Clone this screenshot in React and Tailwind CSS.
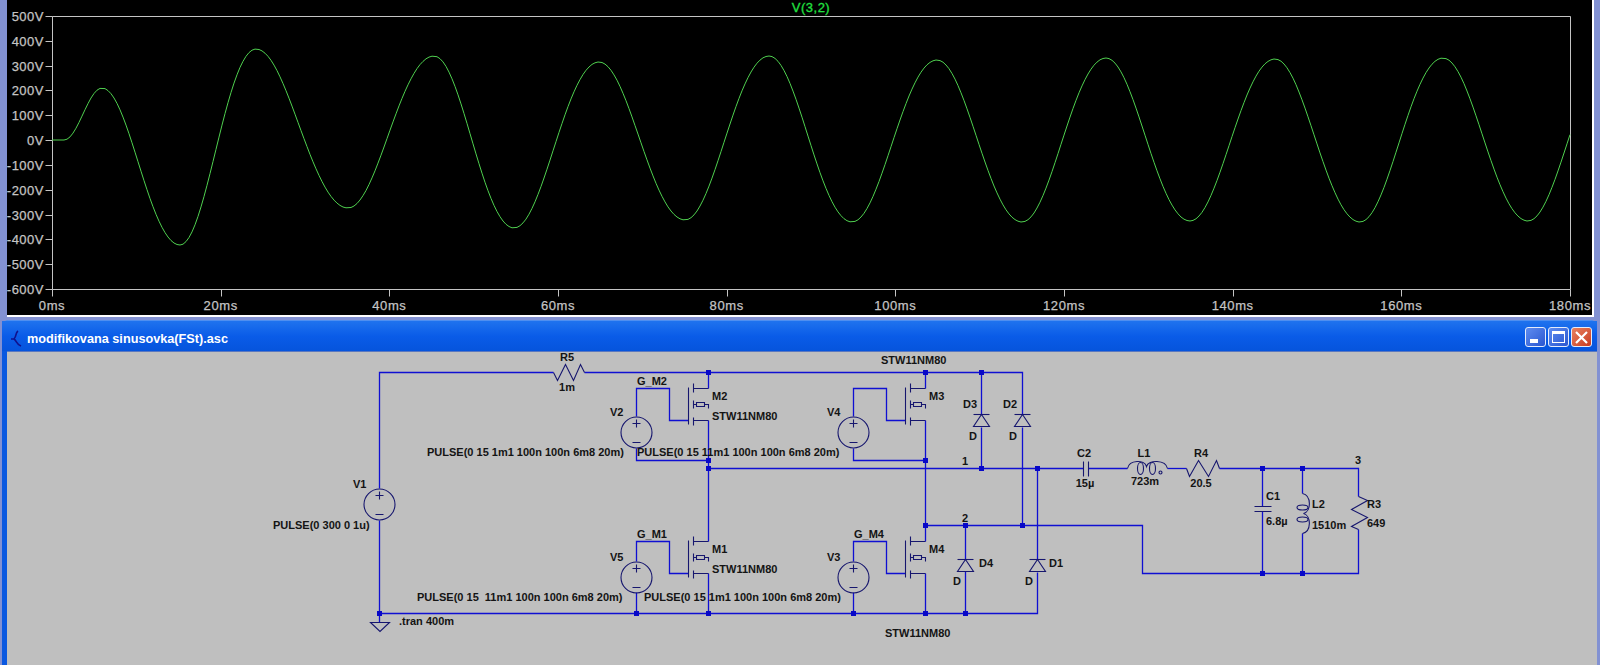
import React from 'react';

// extremes of the V(3,2) trace in page pixels
const EXTREMES = [
  [64, 140], [102, 88], [180, 245], [256, 49], [348, 208], [434, 56], [514, 228], [599, 62],
  [685, 220], [769, 56], [852, 222], [937, 60], [1022, 222], [1106, 58], [1190, 221], [1275, 59],
  [1360, 222], [1443, 58], [1528, 221], [1612, 58],
];

const tracePath = () => {
  let d = 'M52 140 L64 140';
  for (let i = 0; i < EXTREMES.length - 1; i++) {
    const [x0, y0] = EXTREMES[i];
    const [x1, y1] = EXTREMES[i + 1];
    for (let x = x0 + 3; x <= x1 && x <= 1570; x += 3) {
      const t = (x - x0) / (x1 - x0);
      // the trace runs a little ahead of a plain cosine in the middle of each swing
      const bump = i === 0 ? 0 : 0.03 * Math.sin(Math.PI * t) ** 2;
      const y = y0 + ((1 - Math.cos(Math.PI * t)) / 2 + bump) * (y1 - y0);
      d += ` L${x} ${y.toFixed(1)}`;
    }
  }
  return d;
};

const Y_LABELS = ['500V', '400V', '300V', '200V', '100V', '0V', '-100V', '-200V', '-300V', '-400V', '-500V', '-600V'];
const X_LABELS = ['0ms', '20ms', '40ms', '60ms', '80ms', '100ms', '120ms', '140ms', '160ms', '180ms'];

const WIRES = [
  '379,488 379,372 553,372', '584,372 1022,372 1022,414', '1022,427 1022,525',
  '379,520 379,613', '379,613 1037,613 1037,572', '1037,559 1037,468', '379,613 379,622',
  '636,416 636,388 669,388 669,420 688,420', '636,448 636,460 708,460',
  '708,372 708,388', '708,420 708,541', '708,573 708,613',
  '708,468 1083,468', '1088,468 1127,468', '1167,468 1186,468',
  '1219,468 1358,468 1358,496', '1358,529 1358,573 1142,573 1142,525 925,525',
  '925,372 925,388', '925,420 925,541', '925,573 925,613',
  '853,416 853,388 886,388 886,420 905,420', '853,448 853,460 925,460',
  '636,561 636,541 669,541 669,573 688,573', '636,592 636,613',
  '853,561 853,541 886,541 886,573 905,573', '853,592 853,613',
  '981,372 981,414', '981,427 981,468', '965,525 965,559', '965,571 965,613',
  '1262,468 1262,506', '1262,511 1262,573', '1302,468 1302,493', '1302,533 1302,573',
];

const NODES = [
  [708, 372], [925, 372], [981, 372], [708, 460], [708, 468], [925, 460], [981, 468], [1037, 468],
  [1262, 468], [1302, 468], [925, 525], [965, 525], [1022, 525], [379, 613], [636, 613], [708, 613],
  [853, 613], [925, 613], [965, 613], [1262, 573], [1302, 573],
];

const LABELS = [
  ['R5', 567, 361, 'middle'], ['1m', 567, 391, 'middle'],
  ['G_M2', 637, 385], ['V2', 610, 416], ['V1', 353, 488], ['PULSE(0 300 0 1u)', 273, 529],
  ['PULSE(0 15 1m1 100n 100n 6m8 20m)', 427, 456], ['PULSE(0 15 11m1 100n 100n 6m8 20m)', 637, 456],
  ['G_M1', 637, 538], ['V5', 610, 561],
  ['PULSE(0 15  11m1 100n 100n 6m8 20m)', 417, 601], ['PULSE(0 15 1m1 100n 100n 6m8 20m)', 644, 601],
  ['.tran 400m', 399, 625],
  ['M2', 712, 400], ['STW11NM80', 712, 420], ['STW11NM80', 881, 364], ['M3', 929, 400], ['V4', 827, 416],
  ['D3', 963, 408], ['D', 969, 440], ['D2', 1003, 408], ['D', 1009, 440], ['1', 962, 465], ['2', 962, 522],
  ['G_M4', 854, 538], ['M1', 712, 553], ['STW11NM80', 712, 573], ['M4', 929, 553], ['V3', 827, 561],
  ['D4', 979, 567], ['D', 953, 585], ['D1', 1049, 567], ['D', 1025, 585], ['STW11NM80', 885, 637],
  ['C2', 1084, 457, 'middle'], ['15µ', 1085, 487, 'middle'], ['L1', 1144, 457, 'middle'], ['723m', 1145, 485, 'middle'],
  ['R4', 1201, 457, 'middle'], ['20.5', 1201, 487, 'middle'], ['3', 1355, 464],
  ['C1', 1266, 500], ['6.8µ', 1266, 525], ['L2', 1312, 508], ['1510m', 1312, 529], ['R3', 1367, 508], ['649', 1367, 527],
];

const Mosfet = ({ x, y }) => (
  <g>
    <path d={`M${x - 20} ${y - 1}V${y + 36}`} />
    <path d={`M${x - 15} ${y - 5}V${y + 4}M${x - 15} ${y + 12}V${y + 20}M${x - 15} ${y + 29}V${y + 37}`} />
    <path d={`M${x - 15} ${y}H${x}M${x - 15} ${y + 32}H${x}`} />
    <path d={`M${x - 15} ${y + 16}H${x - 12}M${x - 4} ${y + 16}H${x}V${y + 20}`} />
    <path d={`M${x - 12} ${y + 14}H${x - 4}V${y + 18}H${x - 12}Z`} />
  </g>
);

const Source = ({ x, y }) => (
  <g>
    <circle cx={x} cy={y} r="15.5" />
    <path d={`M${x - 4} ${y - 9}H${x + 4}M${x} ${y - 13}V${y - 5}M${x - 4} ${y + 10}H${x + 4}`} />
  </g>
);

const Diode = ({ x, y }) => (
  <g>
    <path d={`M${x - 8} ${y}H${x + 8}`} />
    <path d={`M${x} ${y}L${x + 8} ${y + 12}H${x - 8}Z`} />
  </g>
);

const Waveform = () => (
  <svg width="1585" height="315" viewBox="7 0 1585 315" className="block">
    <text x="811" y="12" textAnchor="middle" stroke="#20e040" strokeWidth="0.3" className="fill-[#20e040] text-[13px] tracking-[0.5px]">V(3,2)</text>
    <g transform="translate(0.5 0.5)" stroke="#c4c4c4" fill="none">
      <path d="M52 16H1570V289H52Z" />
      {Y_LABELS.map((_, i) => (
        <path key={i} d={`M45 ${Math.round(16 + i * 24.82)}H52`} />
      ))}
      {X_LABELS.map((_, i) => (
        <path key={i} d={`M${Math.round(52 + i * 168.67)} 289V296`} />
      ))}
    </g>
    <path d={tracePath()} fill="none" stroke="#4fd04f" strokeWidth="1" />
    {Y_LABELS.map((label, i) => (
      <text key={label} x="44" y={Math.round(21 + i * 24.82)} textAnchor="end" stroke="#c4c4c4" strokeWidth="0.25" className="fill-[#c4c4c4] text-[13px] tracking-[0.5px]">
        {label}
      </text>
    ))}
    {X_LABELS.map((label, i) => (
      <text key={label} x={52 + i * 168.67} y="310" textAnchor="middle" stroke="#c4c4c4" strokeWidth="0.25" className="fill-[#c4c4c4] text-[13px] tracking-[0.6px]">
        {label}
      </text>
    ))}
  </svg>
);

const Schematic = () => (
  <svg width="1590" height="313" viewBox="7 352 1590 313" className="block">
    <g transform="translate(0.5 0.5)" fill="none">
      <g stroke="#0f0fd2" strokeWidth="1.3">
        {WIRES.map((points) => (
          <polyline key={points} points={points} />
        ))}
      </g>
      <g stroke="#16166e" strokeWidth="1.1">
        <path d="M370 622H389L379.5 631Z" />
        <polyline points="553,372 557,380 565,364 573,380 580,364 584,372" />
        <polyline points="1186,468 1189,476 1198,460 1208,476 1216,460 1219,468" />
        <polyline points="1358,496 1367,500 1351,509 1367,517 1351,526 1358,529" />
        <Source x={379} y={504} />
        <Source x={636} y={432} />
        <Source x={853} y={432} />
        <Source x={636} y={577} />
        <Source x={853} y={577} />
        <Mosfet x={708} y={388} />
        <Mosfet x={925} y={388} />
        <Mosfet x={708} y={541} />
        <Mosfet x={925} y={541} />
        <Diode x={981} y={414} />
        <Diode x={1022} y={414} />
        <Diode x={965} y={559} />
        <Diode x={1037} y={559} />
        <path d="M1083 461V476M1088 461V476M1254 506H1271M1254 511H1271" />
        <path d="M1127 468C1129 459 1144 459 1146 466C1148 459 1165 459 1167 468" />
        <ellipse cx="1140" cy="468" rx="3" ry="6" />
        <ellipse cx="1152" cy="468" rx="3" ry="6" />
        <circle cx="1160" cy="472" r="1.5" />
        <path d="M1302 493C1311 495 1311 511 1303 513C1311 515 1311 531 1302 533" />
        <ellipse cx="1302" cy="507" rx="5.5" ry="2.5" />
        <ellipse cx="1302" cy="519" rx="5.5" ry="2.5" />
      </g>
      <g fill="#0808c8">
        {NODES.map(([x, y]) => (
          <rect key={`${x}-${y}`} x={x - 2.5} y={y - 2.5} width="5" height="5" />
        ))}
      </g>
    </g>
    {LABELS.map(([label, x, y, anchor], i) => (
      <text key={i} x={x} y={y} textAnchor={anchor || 'start'} className="fill-[#141414] text-[11px] font-bold" xmlSpace="preserve">
        {label}
      </text>
    ))}
  </svg>
);

const TitleButton = ({ className, children }) => (
  <div className={`w-[21px] h-[20px] rounded-[3px] border border-[#e4ecfb] flex ${className}`}>{children}</div>
);

export default function App() {
  return (
    <div className="w-[1600px] h-[665px] overflow-hidden flex flex-col bg-[#8291d2] font-['Liberation_Sans',sans-serif]">
      <div className="h-[320px] shrink-0 pl-[7px] pr-[6px] pb-[3px]">
        <div className="h-[317px] bg-black border-r-2 border-b-2 border-white">
          <Waveform />
        </div>
      </div>
      <div className="flex-1 min-h-0 ml-[2px] mr-[3px] flex flex-col rounded-t-md bg-[#0a58e0] border-t border-[#4f8ff0]">
        <div className="h-[30px] shrink-0 flex items-center pt-[2px] pl-[8px] pr-[5px] bg-linear-to-b from-[#1f73ee] via-[#0a5ce8] to-[#0654dc]">
          <svg width="12" height="18" viewBox="0 0 12 18" fill="none" stroke="#10108c" strokeWidth="1.6" className="mr-[5px] mt-[3px] shrink-0">
            <path d="M8 1C5 3 7 6 4 9C7 11 6 14 11 16M4 9H1" />
          </svg>
          <span className="text-white font-bold text-[12.7px] leading-none mt-[4px]">modifikovana sinusovka(FSt).asc</span>
          <div className="ml-auto flex gap-[2px]">
            <TitleButton className="bg-linear-to-br from-[#5f8cf0] to-[#2a56d0] items-end pl-[4px] pb-[3px]">
              <div className="w-[8px] h-[4px] bg-white" />
            </TitleButton>
            <TitleButton className="bg-linear-to-br from-[#5f8cf0] to-[#2a56d0] items-center justify-center">
              <div className="w-[13px] h-[12px] border border-white border-t-[3px]" />
            </TitleButton>
            <TitleButton className="bg-linear-to-br from-[#e8805f] to-[#c83a1e] items-center justify-center">
              <svg width="13" height="13" viewBox="0 0 13 13" stroke="#fff" strokeWidth="2.2">
                <path d="M1 1L12 12M12 1L1 12" />
              </svg>
            </TitleButton>
          </div>
        </div>
        <div className="flex-1 min-h-0 ml-[5px] bg-[#bfbfbf] border-t border-[#5a78c0] overflow-hidden">
          <Schematic />
        </div>
      </div>
    </div>
  );
}
